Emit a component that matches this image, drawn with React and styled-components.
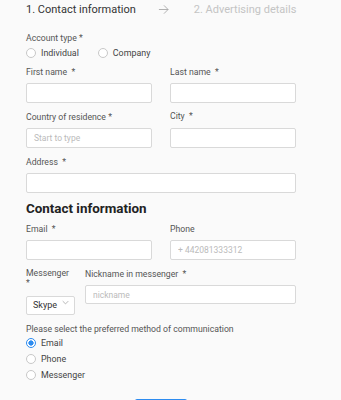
import React from "react";
import styled, { createGlobalStyle } from "styled-components";

const GlobalStyle = createGlobalStyle`
  html, body {
    margin: 0;
    padding: 0;
    background: #fafafa;
    font-family: Roboto, "Liberation Sans", Arial, sans-serif;
  }
`;

export default function App() {
  return (
    <>
      <GlobalStyle />
      <Page>
        <Steps>
          <Step $active>1. Contact information</Step>
          <Arrow viewBox="0 0 12 12">
            <path d="M1 6h10M6.5 1.5 11 6l-4.5 4.5" />
          </Arrow>
          <Step>2. Advertising details</Step>
        </Steps>

        <Group>
          <Label>Account type *</Label>
          <RadioRow>
            <RadioLabel>
              <Radio type="radio" name="account" />
              Individual
            </RadioLabel>
            <RadioLabel>
              <Radio type="radio" name="account" />
              Company
            </RadioLabel>
          </RadioRow>
        </Group>

        <TwoCols>
          <Field>
            <Label>First name &nbsp;*</Label>
            <Input />
          </Field>
          <Field>
            <Label>Last name &nbsp;*</Label>
            <Input />
          </Field>
        </TwoCols>

        <TwoCols>
          <Field>
            <Label>Country of residence *</Label>
            <Input placeholder="Start to type" />
          </Field>
          <Field>
            <Label $raise>City &nbsp;*</Label>
            <Input />
          </Field>
        </TwoCols>

        <Field>
          <Label>Address &nbsp;*</Label>
          <Input $wide />
        </Field>

        <Heading>Contact information</Heading>

        <TwoCols>
          <Field>
            <Label>Email &nbsp;*</Label>
            <Input />
          </Field>
          <Field>
            <Label>Phone</Label>
            <Input placeholder="+ 442081333312" />
          </Field>
        </TwoCols>

        <MessengerRow>
          <Field>
            <Label>Messenger *</Label>
            <SelectWrap>
              <Select defaultValue="skype">
                <option value="skype">Skype</option>
              </Select>
              <Chevron viewBox="0 0 10 6">
                <path d="M1 1l4 4 4-4" />
              </Chevron>
            </SelectWrap>
          </Field>
          <Field>
            <Label>Nickname in messenger &nbsp;*</Label>
            <Input $short placeholder="nickname" />
          </Field>
        </MessengerRow>

        <Group>
          <Label>Please select the preferred method of communication</Label>
          <RadioColumn>
            <RadioLabel>
              <Radio type="radio" name="method" defaultChecked />
              Email
            </RadioLabel>
            <RadioLabel>
              <Radio type="radio" name="method" />
              Phone
            </RadioLabel>
            <RadioLabel>
              <Radio type="radio" name="method" />
              Messenger
            </RadioLabel>
          </RadioColumn>
        </Group>

        <Submit>Next</Submit>
      </Page>
    </>
  );
}

const Page = styled.div`
  padding: 0 0 0 26px;
  width: 270px;
  display: flex;
  flex-direction: column;
`;

const Steps = styled.div`
  display: flex;
  align-items: center;
  white-space: nowrap;
  height: 19px;
  margin-bottom: 13px;
`;

const Step = styled.span`
  flex-shrink: 0;
  font-size: 11px;
  color: ${(p) => (p.$active ? "#333" : "#c4c4c4")};
`;

const Arrow = styled.svg`
  flex-shrink: 0;
  width: 11px;
  height: 11px;
  margin: 0 25px 0 22px;
  fill: none;
  stroke: #aaa;
  stroke-width: 1;
`;

const Group = styled.div`
  display: flex;
  flex-direction: column;
  margin-bottom: 7px;
`;

const Label = styled.label`
  font-size: 8.7px;
  line-height: 12px;
  color: #555;
  margin-bottom: ${(p) => (p.$raise ? "6px" : "5px")};
  margin-top: ${(p) => (p.$raise ? "-1px" : "0")};
`;

const RadioRow = styled.div`
  display: flex;
  gap: 19px;
  margin-top: -2px;
`;

const RadioColumn = styled.div`
  display: flex;
  flex-direction: column;
  gap: 4px;
  margin-top: -3px;
`;

const RadioLabel = styled.label`
  display: flex;
  align-items: center;
  font-size: 8.9px;
  line-height: 12px;
  color: #444;
`;

const Radio = styled.input`
  appearance: none;
  width: 10px;
  height: 10px;
  margin: 0 5px 0 0;
  border: 1px solid #c8c8c8;
  border-radius: 50%;
  background: #fff;
  box-sizing: border-box;

  &:checked {
    border-color: #2d8cf0;
    background: radial-gradient(circle, #2d8cf0 0 2.4px, #fff 2.8px);
  }
`;

const TwoCols = styled.div`
  display: grid;
  grid-template-columns: 126px 126px;
  column-gap: 18px;
  margin-bottom: 8px;
`;

const Field = styled.div`
  display: flex;
  flex-direction: column;
`;

const Input = styled.input`
  box-sizing: border-box;
  width: ${(p) => (p.$wide ? "270px" : p.$short ? "211px" : "126px")};
  height: ${(p) => (p.$short ? "19px" : "20px")};
  border: 1px solid #d9d9d9;
  border-radius: 2px;
  background: #fff;
  padding: 0 7px;
  font-family: inherit;
  font-size: 8.5px;
  color: #333;
  outline: none;

  &::placeholder {
    color: #bbb;
  }
`;

const Heading = styled.h2`
  margin: 7px 0 5px;
  font-size: 13.4px;
  line-height: 18px;
  font-weight: 700;
  color: #222;
`;

const MessengerRow = styled.div`
  display: grid;
  grid-template-columns: 49px 211px;
  column-gap: 10px;
  margin-bottom: 8px;

  & > div:first-child label {
    width: 40px;
    line-height: 10px;
    margin-bottom: 5px;
  }
`;

const SelectWrap = styled.div`
  position: relative;
  width: 49px;
`;

const Select = styled.select`
  appearance: none;
  box-sizing: border-box;
  width: 49px;
  height: 19px;
  border: 1px solid #d9d9d9;
  border-radius: 2px;
  background: #fff;
  padding: 0 0 0 6px;
  font-family: inherit;
  font-size: 9px;
  color: #333;
  outline: none;
`;

const Chevron = styled.svg`
  position: absolute;
  right: 6px;
  top: 7px;
  width: 7px;
  height: 5px;
  fill: none;
  stroke: #999;
  stroke-width: 1;
  pointer-events: none;
`;

const Submit = styled.button`
  align-self: flex-start;
  margin: 11px 0 0 109px;
  width: 52px;
  height: 28px;
  border: none;
  border-radius: 2px;
  background: #2d8cf0;
  color: #fff;
  font-family: inherit;
  font-size: 11px;
`;
